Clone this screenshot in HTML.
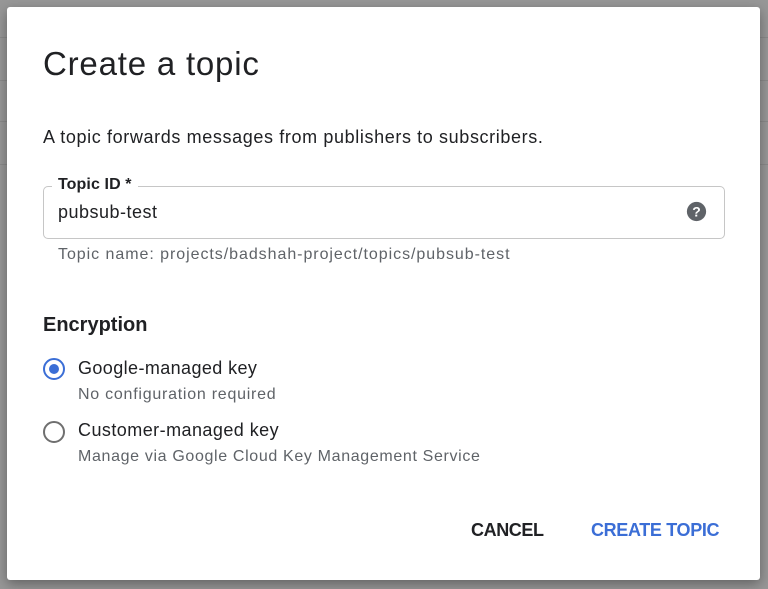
<!DOCTYPE html><html><head><style>
body{margin:0;width:768px;height:589px;background:#979797;font-family:"Liberation Sans",sans-serif;position:relative;overflow:hidden}
.bgl{position:absolute;left:0;right:0;height:1px;background:#8a8a8a}
.d{position:absolute;left:7px;top:7px;width:753px;height:573px;background:#fff;border-radius:3px;box-shadow:0 4px 12px rgba(0,0,0,.35)}
.t{position:absolute;white-space:nowrap;color:#202124}
</style></head><body>
<div class="bgl" style="top:37px"></div><div class="bgl" style="top:80px"></div><div class="bgl" style="top:121px"></div><div class="bgl" style="top:164px"></div>
<div class="d"></div>
<div class="t" style="left:43px;top:45px;font-size:33px;letter-spacing:.8px">Create a topic</div>
<div class="t" style="left:43px;top:127px;font-size:18px;letter-spacing:.62px">A topic forwards messages from publishers to subscribers.</div>
<div style="position:absolute;left:43px;top:186px;width:680px;height:51px;border:1px solid #c6c6c6;border-radius:5px"></div>
<div class="t" style="left:52px;top:176px;background:#fff;padding:0 6px;font-size:16px;font-weight:bold;letter-spacing:.1px">Topic ID *</div>
<div class="t" style="left:58px;top:202px;font-size:18px;letter-spacing:.5px">pubsub-test</div>
<svg style="position:absolute;left:686px;top:201px" width="21" height="21" viewBox="0 0 24 24"><circle cx="12" cy="12" r="11" fill="#5f6368"/><text x="12" y="17.5" font-size="16" font-weight="bold" fill="#fff" text-anchor="middle" font-family="Liberation Sans">?</text></svg>
<div class="t" style="left:58px;top:246px;font-size:16px;color:#5f6368;letter-spacing:.95px">Topic name: projects/badshah-project/topics/pubsub-test</div>
<div class="t" style="left:43px;top:314px;font-size:20px;font-weight:bold;letter-spacing:0">Encryption</div>
<div style="position:absolute;left:43px;top:358px;width:18px;height:18px;border:2px solid #3b6ed6;border-radius:50%"></div>
<div style="position:absolute;left:49px;top:364px;width:10px;height:10px;background:#3b6ed6;border-radius:50%"></div>
<div class="t" style="left:78px;top:358px;font-size:18px;letter-spacing:.4px">Google-managed key</div>
<div class="t" style="left:78px;top:386px;font-size:16px;color:#5f6368;letter-spacing:.75px">No configuration required</div>
<div style="position:absolute;left:43px;top:421px;width:18px;height:18px;border:2px solid #6f6f6f;border-radius:50%"></div>
<div class="t" style="left:78px;top:420px;font-size:18px;letter-spacing:.45px">Customer-managed key</div>
<div class="t" style="left:78px;top:448px;font-size:16px;color:#5f6368;letter-spacing:.65px">Manage via Google Cloud Key Management Service</div>
<div class="t" style="left:471px;top:520px;font-size:18px;font-weight:bold;letter-spacing:-.4px">CANCEL</div>
<div class="t" style="left:591px;top:520px;font-size:18px;font-weight:bold;color:#3b6ed6;letter-spacing:-.35px">CREATE TOPIC</div>
</body></html>
